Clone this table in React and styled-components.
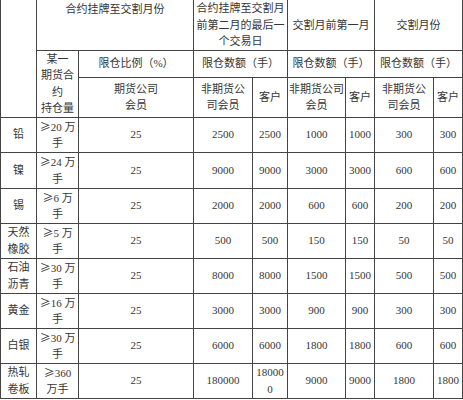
import React from 'react';
import styled, { createGlobalStyle } from 'styled-components';

const Global = createGlobalStyle`
  html, body {
    margin: 0;
    padding: 0;
    background: #fff;
  }
  body {
    font-family: "Liberation Serif", "Noto Sans CJK SC", serif;
    color: #363636;
  }
`;

const Table = styled.table`
  border-collapse: collapse;
  table-layout: fixed;
  width: 463px;
  font-size: 11px;
  line-height: 16.5px;
`;

const Row = styled.tr`
  height: ${(p) => p.$h}px;
`;

const Cell = styled.td`
  border: 1px solid #444;
  padding: ${(p) => (p.$top ? '1px 1px 0' : '0 1px')};
  text-align: center;
  vertical-align: ${(p) => (p.$top ? 'top' : 'middle')};
  white-space: nowrap;
  ${(p) => p.$noTop && 'border-top: none;'}
`;

const Ge = styled.span`
  font-family: "Noto Sans CJK SC", sans-serif;
`;

const cols = [36, 42, 115, 59, 35, 58, 29, 59, 29];

const rows = [
  ['铅', ['≥20 万', '手'], '2500', '2500', '1000', '1000', '300', '300'],
  ['镍', ['≥24 万', '手'], '9000', '9000', '3000', '3000', '600', '600'],
  ['锡', ['≥6 万', '手'], '2000', '2000', '600', '600', '200', '200'],
  [['天然', '橡胶'], ['≥5 万', '手'], '500', '500', '150', '150', '50', '50'],
  [['石油', '沥青'], ['≥30 万', '手'], '8000', '8000', '1500', '1500', '500', '500'],
  ['黄金', ['≥16 万', '手'], '3000', '3000', '900', '900', '300', '300'],
  ['白银', ['≥30 万', '手'], '6000', '6000', '1800', '1800', '600', '600'],
  [['热轧', '卷板'], ['≥360', '万手'], '180000', ['18000', '0'], '9000', '9000', '1800', '1800'],
];

const heights = [35, 36, 35, 35, 35, 35, 35, 35];

const withGe = (line) =>
  line.startsWith('≥') ? (
    <>
      <Ge>≥</Ge>
      {line.slice(1)}
    </>
  ) : (
    line
  );

const Lines = ({ v }) =>
  Array.isArray(v)
    ? v.map((line, i) => (
        <React.Fragment key={i}>
          {i > 0 && <br />}
          {withGe(line)}
        </React.Fragment>
      ))
    : v;

export default function App() {
  return (
    <>
      <Global />
      <Table>
        <colgroup>
          {cols.map((w, i) => (
            <col key={i} style={{ width: w }} />
          ))}
        </colgroup>
        <tbody>
          <Row $h={50}>
            <Cell rowSpan={3} $noTop />
            <Cell colSpan={2} $top $noTop>合约挂牌至交割月份</Cell>
            <Cell colSpan={2} $noTop>
              <Lines v={['合约挂牌至交割月', '前第二月的最后一', '个交易日']} />
            </Cell>
            <Cell colSpan={2} $noTop>交割月前第一月</Cell>
            <Cell colSpan={2} $noTop>交割月份</Cell>
          </Row>
          <Row $h={27}>
            <Cell rowSpan={2}>
              <Lines v={['某一', '期货合', '约', '持仓量']} />
            </Cell>
            <Cell>限仓比例（%）</Cell>
            <Cell colSpan={2}>限仓数额（手）</Cell>
            <Cell colSpan={2}>限仓数额（手）</Cell>
            <Cell colSpan={2}>限仓数额（手）</Cell>
          </Row>
          <Row $h={40}>
            <Cell><Lines v={['期货公司', '会员']} /></Cell>
            <Cell><Lines v={['非期货公', '司会员']} /></Cell>
            <Cell>客户</Cell>
            <Cell><Lines v={['非期货公司', '会员']} /></Cell>
            <Cell>客户</Cell>
            <Cell><Lines v={['非期货公', '司会员']} /></Cell>
            <Cell>客户</Cell>
          </Row>
          {rows.map((r, i) => (
            <Row key={i} $h={heights[i]}>
              <Cell><Lines v={r[0]} /></Cell>
              <Cell><Lines v={r[1]} /></Cell>
              <Cell>25</Cell>
              {r.slice(2).map((v, j) => (
                <Cell key={j}><Lines v={v} /></Cell>
              ))}
            </Row>
          ))}
        </tbody>
      </Table>
    </>
  );
}
